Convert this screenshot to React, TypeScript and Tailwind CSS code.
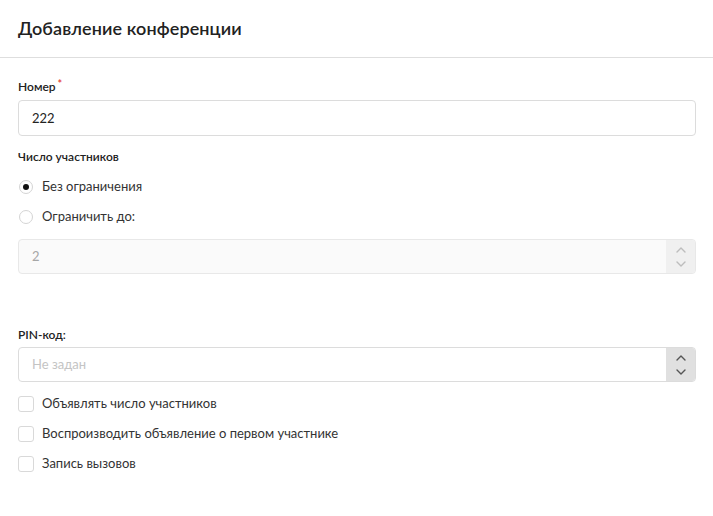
import React, { useState } from "react";

const FONT = { fontFamily: "Lato, 'Noto Sans', sans-serif" };

function Chevron({ dir, className }: { dir: "up" | "down"; className?: string }) {
    return (
        <svg width="10" height="6" viewBox="0 0 10 6" className={className}>
            <path
                d={dir === "up" ? "M1 5L5 1l4 4" : "M1 1l4 4 4-4"}
                fill="none"
                stroke="currentColor"
                strokeWidth="1.4"
                strokeLinecap="round"
                strokeLinejoin="round"
            />
        </svg>
    );
}

function Radio({ checked, label, onClick }: { checked: boolean; label: string; onClick: () => void }) {
    return (
        <label onClick={onClick} className="flex items-center h-[30px] gap-[9px] cursor-pointer">
            <span className="w-[14px] h-[14px] ml-[1px] rounded-full border border-[#d4d4d4] bg-white flex items-center justify-center">
                {checked && <span className="w-[6px] h-[6px] rounded-full bg-[#111]" />}
            </span>
            <span className="text-[13px] text-[#333]">{label}</span>
        </label>
    );
}

function Checkbox({ label }: { label: string }) {
    const [on, setOn] = useState(false);
    return (
        <label onClick={() => setOn(!on)} className="flex items-center h-[30px] gap-[8px] cursor-pointer">
            <span className="w-[16px] h-[16px] rounded-[3px] border border-[#d9d9d9] bg-white flex items-center justify-center text-[10px]">
                {on && "✓"}
            </span>
            <span className="text-[13px] text-[#333]">{label}</span>
        </label>
    );
}

export default function App() {
    const [limit, setLimit] = useState(false);

    return (
        <div style={FONT} className="w-[713px] h-[516px] bg-white text-[#222]">
            {/* Header */}
            <div className="h-[58px] border-b border-[#dedede] px-[18px] flex items-center">
                <h1 className="text-[18px] font-semibold text-[#222] tracking-[0.1px]">Добавление конференции</h1>
            </div>

            <div className="px-[18px] pr-[17px] pt-[21px]">
                <div className="text-[12px] font-semibold leading-[16px] text-[#222]">
                    Номер<span className="text-[#e53935] align-top text-[11px] ml-[2px] relative -top-[3px]">*</span>
                </div>
                <input
                    defaultValue="222"
                    className="mt-[5px] w-full h-[36px] rounded-[4px] border border-[#dcdcdc] px-[13px] text-[13px] text-[#222] outline-none"
                />

                <div className="mt-[13px] text-[12px] font-semibold leading-[16px]">Число участников</div>
                <div className="mt-[7px]">
                    <Radio checked={!limit} label="Без ограничения" onClick={() => setLimit(false)} />
                    <Radio checked={limit} label="Ограничить до:" onClick={() => setLimit(true)} />
                </div>
                <div className="mt-[7px] flex h-[35px] rounded-[4px] border border-[#e8e8e8] bg-[#fafafa] overflow-hidden">
                    <div className="flex-1 flex items-center px-[13px] text-[13px] text-[#a6a6a6]">2</div>
                    <div className="w-[29px] bg-[#f0f0f0] flex flex-col items-center justify-center gap-[8px] text-[#bdbdbd]">
                        <Chevron dir="up" />
                        <Chevron dir="down" />
                    </div>
                </div>

                <div className="mt-[53px] text-[12px] font-semibold leading-[16px]">PIN-код:</div>
                <div className="mt-[4px] flex h-[35px] rounded-[4px] border border-[#dcdcdc] overflow-hidden">
                    <input
                        placeholder="Не задан"
                        className="flex-1 px-[13px] text-[13px] outline-none placeholder:text-[#c4c4c4]"
                    />
                    <div className="w-[29px] bg-[#e0e0e0] flex flex-col items-center justify-center gap-[8px] text-[#555]">
                        <Chevron dir="up" />
                        <Chevron dir="down" />
                    </div>
                </div>

                <div className="mt-[7px]">
                    <Checkbox label="Объявлять число участников" />
                    <Checkbox label="Воспроизводить объявление о первом участнике" />
                    <Checkbox label="Запись вызовов" />
                </div>
            </div>
        </div>
    );
}
